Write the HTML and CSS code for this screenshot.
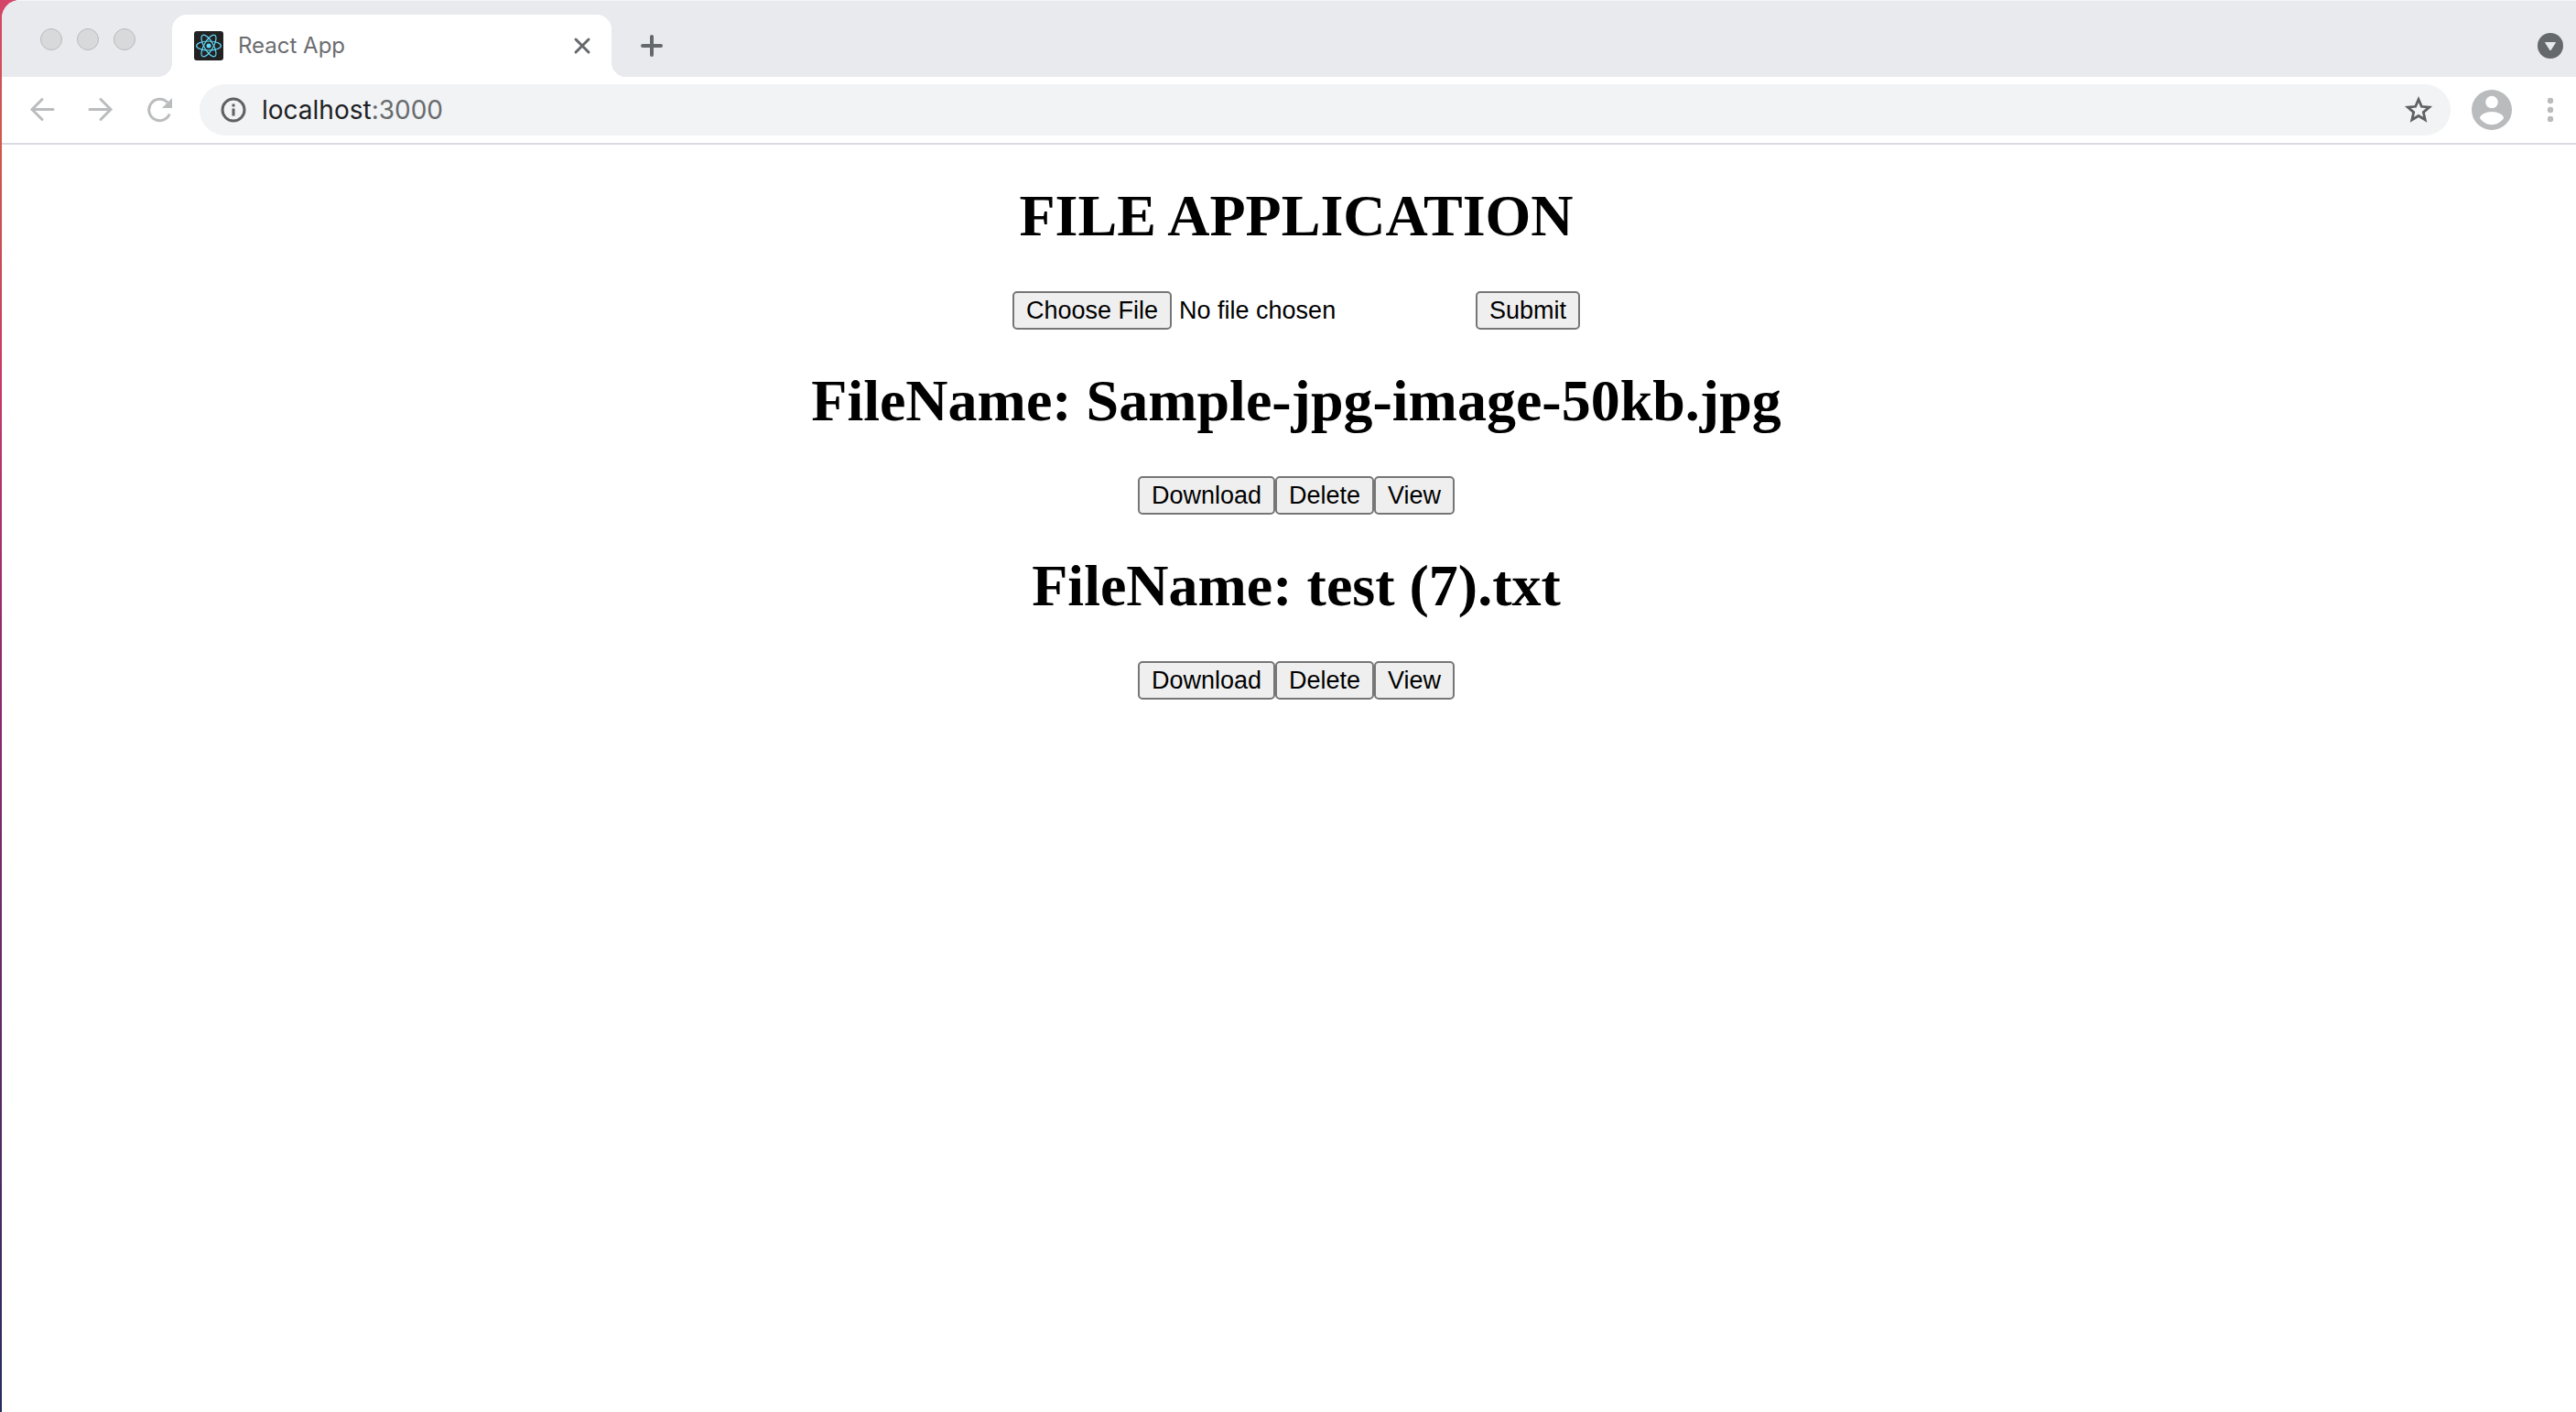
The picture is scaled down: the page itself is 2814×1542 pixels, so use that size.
FILE: index.html
```html
<!DOCTYPE html>
<html lang="en">
<head>
<meta charset="utf-8">
<title>React App</title>
<link rel="stylesheet" href="styles.css">
</head>
<body>
<div class="window">
  <header class="tabstrip">
    <div class="lights"><span class="light"></span><span class="light"></span><span class="light"></span></div>
    <div class="tab">
      <svg class="favicon" width="32" height="32" viewBox="0 0 32 32" aria-hidden="true">
        <rect width="32" height="32" rx="3" fill="#222"/>
        <g fill="none" stroke="#61dafb" stroke-width="1.2">
          <ellipse cx="16" cy="16" rx="13.4" ry="5"/>
          <ellipse cx="16" cy="16" rx="13.4" ry="5" transform="rotate(60 16 16)"/>
          <ellipse cx="16" cy="16" rx="13.4" ry="5" transform="rotate(120 16 16)"/>
        </g>
        <circle cx="16" cy="16" r="2.5" fill="#61dafb"/>
      </svg>
      <span class="tab-title">React App</span>
      <button class="icon-btn" aria-label="Close tab">
        <svg width="20" height="20" viewBox="0 0 20 20"><path d="M3 3l14 14M17 3L3 17" stroke="#66696c" stroke-width="3" stroke-linecap="round"/></svg>
      </button>
    </div>
    <button class="icon-btn new-tab" aria-label="New tab">
      <svg width="24" height="24" viewBox="0 0 24 24"><path d="M12 2v20M2 12h20" stroke="#66696c" stroke-width="4" stroke-linecap="round"/></svg>
    </button>
    <button class="icon-btn tab-search" aria-label="Search tabs">
      <svg width="28" height="28" viewBox="0 0 28 28"><circle cx="14" cy="14" r="14" fill="#66696c"/><path d="M8.500 10.500h11L14 19z" fill="#e8eaed" stroke="#e8eaed" stroke-linejoin="round"/></svg>
    </button>
  </header>
  <nav class="toolbar">
    <div class="nav-buttons">
      <button class="icon-btn" aria-label="Back">
        <svg width="28" height="28" viewBox="0 0 28 28"><path d="M26 13.500H3M14 2.500L3 13.500l11 11" fill="none" stroke="#babcbe" stroke-width="3" stroke-linecap="round"/></svg>
      </button>
      <button class="icon-btn" aria-label="Forward">
        <svg width="28" height="28" viewBox="0 0 28 28"><path d="M2 13.500h23M14 2.500l11 11-11 11" fill="none" stroke="#babcbe" stroke-width="3" stroke-linecap="round"/></svg>
      </button>
      <button class="icon-btn" aria-label="Reload">
        <svg width="28" height="28" viewBox="0 0 28 28"><path d="M25.200 18.500A11.700 11.700 0 1 1 23 6" fill="none" stroke="#babcbe" stroke-width="3"/><path d="M28 1v11H17z" fill="#babcbe"/></svg>
      </button>
    </div>
    <div class="omnibox">
      <svg width="28" height="28" viewBox="0 0 28 28" aria-hidden="true"><circle cx="14" cy="14" r="12" fill="none" stroke="#5f6163" stroke-width="3"/><path d="M12.500 7.500h3v3h-3zM12.500 12.500h3v8h-3z" fill="#5f6163"/></svg>
      <a class="url" href="http://localhost:3000">localhost<span class="port">:3000</span></a>
      <button class="icon-btn" aria-label="Bookmark this tab">
        <svg width="32" height="32" viewBox="0 0 32 32"><path d="M16 4.500l3.300 7.800 8.400.700-6.400 5.600 1.900 8.200L16 22.500l-7.200 4.300 1.900-8.200L4.300 13l8.400-.700z" fill="none" stroke="#5f6163" stroke-width="2.800"/></svg>
      </button>
    </div>
    <button class="icon-btn avatar" aria-label="Profile">
      <svg width="44" height="44" viewBox="0 0 44 44"><circle cx="22" cy="22" r="22" fill="#b9bbbd"/><circle cx="22" cy="13.500" r="6.800" fill="#fff"/><path d="M9 31c0-4 7-7 13-7s13 3 13 7c-3 4.600-8 7.200-13 7.200S12 35.600 9 31z" fill="#fff"/></svg>
    </button>
    <button class="icon-btn" aria-label="Menu">
      <svg width="8" height="28" viewBox="0 0 8 28"><g fill="#b9bbbd"><circle cx="4" cy="4" r="3.200"/><circle cx="4" cy="14" r="3.200"/><circle cx="4" cy="24" r="3.200"/></g></svg>
    </button>
  </nav>
  <main class="page">
    <h1 class="title">FILE APPLICATION</h1>
    <form class="row">
      <input class="file" type="file" aria-label="File">
      <button class="btn" type="button">Submit</button>
    </form>
    <h1 class="title">FileName: Sample-jpg-image-50kb.jpg</h1>
    <div class="row">
      <button class="btn">Download</button><button class="btn">Delete</button><button class="btn">View</button>
    </div>
    <h1 class="title">FileName: test (7).txt</h1>
    <div class="row">
      <button class="btn">Download</button><button class="btn">Delete</button><button class="btn">View</button>
    </div>
  </main>
</div>
</body>
</html>
```
FILE: styles.css
```css
* { box-sizing: border-box; }

body {
  margin: 0;
  min-height: 100vh;
  padding-left: 2px;
  background: linear-gradient(#d4446a, #cf5a4c 10%, #cc4a56 18%, #c4386a 28%, #92296f 46%, #4a2a62 85%, #252c5e);
}

.window {
  min-height: 100vh;
  background: #fff;
  border-radius: 20px 0 0 0;
  overflow: hidden;
}

.icon-btn {
  display: flex;
  padding: 0;
  border: 0;
  background: none;
}

.tabstrip {
  display: flex;
  align-items: flex-end;
  height: 84px;
  padding-right: 14px;
  background: #e8eaed;
  border-top: 1px solid #f4f5f6;
}

.lights {
  display: flex;
  gap: 16px;
  width: 186px;
  padding: 0 0 29px 42px;
}

.light {
  width: 24px;
  height: 24px;
  border: 1px solid #b9babc;
  border-radius: 50%;
  background: #d8d9db;
}

.tab {
  position: relative;
  display: flex;
  align-items: center;
  width: 480px;
  height: 68px;
  padding: 0 22px 0 24px;
  background: #fff;
  border-radius: 16px 16px 0 0;
}

.tab::before,
.tab::after {
  content: "";
  position: absolute;
  bottom: 0;
  width: 16px;
  height: 16px;
}

.tab::before {
  right: 100%;
  background: radial-gradient(circle at 0 0, transparent 16px, #fff 16px);
}

.tab::after {
  left: 100%;
  background: radial-gradient(circle at 100% 0, transparent 16px, #fff 16px);
}

.tab-title {
  flex: 1;
  padding-left: 16px;
  font: 24px/32px Inter, sans-serif;
  color: #6b6d70;
}

.new-tab { padding: 0 0 22px 32px; }

.tab-search {
  margin-left: auto;
  padding-bottom: 20px;
}

.toolbar {
  display: flex;
  align-items: center;
  height: 74px;
  padding: 0 24px 0 30px;
  border-bottom: 2px solid #dadbe2;
}

.nav-buttons {
  display: flex;
  gap: 36px;
  width: 186px;
}

.omnibox {
  flex: 1;
  display: flex;
  align-items: center;
  height: 56px;
  padding: 0 19px 0 23px;
  border-radius: 28px;
  background: #f1f3f4;
}

.url {
  flex: 1;
  padding-left: 17px;
  font: 28px/36px Inter, sans-serif;
  color: #202124;
  text-decoration: none;
}

.port { color: #696b6e; }

.avatar { margin: 0 38px 0 23px; }

.page {
  display: flow-root;
  padding-left: 16px;
}

.title {
  margin: 41px 0 45px;
  font: bold 64px/74px "Liberation Serif", serif;
  text-align: center;
  color: #000;
}

.row {
  display: flex;
  justify-content: center;
}

.btn,
.file,
.file::file-selector-button {
  font: 27px/36px "Liberation Sans", sans-serif;
  color: #000;
}

.btn,
.file::file-selector-button {
  height: 42px;
  min-width: 88px;
  padding: 0 13px;
  border: 2px solid #767676;
  border-radius: 5px;
  background: #efefef;
}

.file { width: 506px; }

.file::file-selector-button { margin-right: 8px; }
```
